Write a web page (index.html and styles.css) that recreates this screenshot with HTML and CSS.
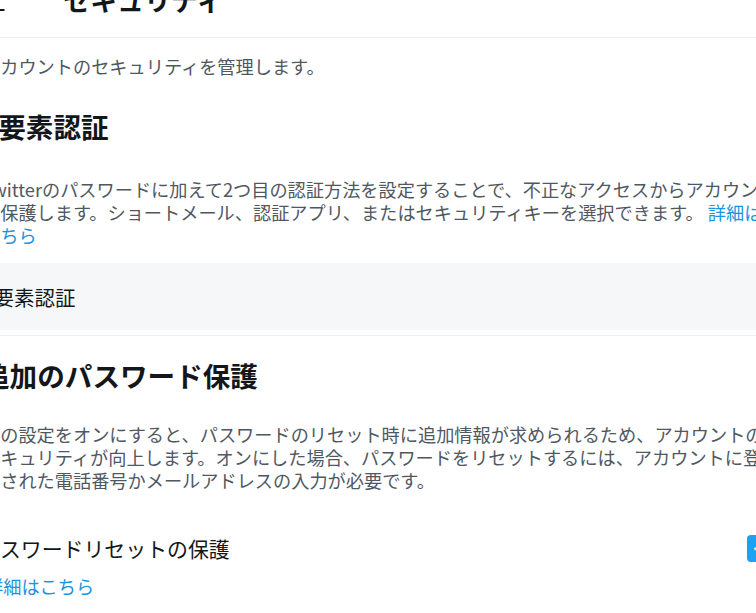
FILE: index.html
```html
<!DOCTYPE html>
<html lang="ja">

<head>
    <meta charset="UTF-8">
    <meta name="viewport" content="width=device-width, initial-scale=1.0">
    <title>セキュリティ</title>
    <link rel="stylesheet" href="styles.css">
</head>

<body>
    <div class="page">
        <!-- ヘッダー -->
        <header class="topbar">
            <span class="back">
                <svg viewBox="0 0 24 24" width="26" height="26">
                    <path d="M20 11H7.414l4.293-4.293c.39-.39.39-1.023 0-1.414s-1.023-.39-1.414 0l-6 6c-.39.39-.39 1.023 0 1.414l6 6c.195.195.45.293.707.293s.512-.098.707-.293c.39-.39.39-1.023 0-1.414L7.414 13H20c.553 0 1-.447 1-1s-.447-1-1-1z"></path>
                </svg>
            </span>
            <h2 class="title">セキュリティ</h2>
        </header>

        <p class="lead">アカウントのセキュリティを管理します。</p>

        <!-- 2要素認証 -->
        <section class="block">
            <h3 class="heading">2要素認証</h3>
            <p class="desc">Twitterのパスワードに加えて2つ目の認証方法を設定することで、不正なアクセスからアカウント<br>を保護します。ショートメール、認証アプリ、またはセキュリティキーを選択できます。 <a class="link" href="#">詳細は<br>こちら</a></p>
        </section>

        <div class="row">2要素認証</div>
        <div class="divider"></div>

        <!-- 追加のパスワード保護 -->
        <section class="block">
            <h3 class="heading heading-2">追加のパスワード保護</h3>
            <p class="desc desc-2">この設定をオンにすると、パスワードのリセット時に追加情報が求められるため、アカウントの<br>セキュリティが向上します。オンにした場合、パスワードをリセットするには、アカウントに登<br>録された電話番号かメールアドレスの入力が必要です。</p>
            <div class="check-row">
                <span class="check-label">パスワードリセットの保護</span>
                <span class="checkbox">
                    <svg viewBox="0 0 24 24" width="20" height="20">
                        <path d="M5 12.5l4.5 4.5L19 7.5" fill="none" stroke="#fff" stroke-width="2.6" stroke-linecap="round" stroke-linejoin="round"></path>
                    </svg>
                </span>
            </div>
            <a class="link more" href="#">詳細はこちら</a>
        </section>
    </div>
</body>

</html>
```

FILE: styles.css
```css
/* 全体 */
body {
    margin: 0;
    overflow: hidden;
    background-color: #fff;
    color: #14171a;
    font-family: "Noto Sans CJK JP", "Liberation Sans", sans-serif;
}

.page {
    width: 840px;
    margin-left: -40px;
}

/* ヘッダー */
.topbar {
    display: flex;
    align-items: flex-start;
    box-sizing: border-box;
    height: 68px;
    margin-top: -30px;
    padding: 13.5px 26px 0 22px;
    border-bottom: 1px solid #eceff1;
}

.back {
    display: flex;
    margin-top: 13.5px;
}

.back svg {
    fill: #14171a;
}

.title {
    margin: 0 0 0 55px;
    font-size: 27px;
    line-height: 32px;
    font-weight: 700;
}

/* 説明文 */
.lead,
.desc {
    margin: 16.5px 0 0;
    padding: 0 26px 0 22px;
    font-size: 18.2px;
    line-height: 23px;
    color: #50585f;
    white-space: nowrap;
}

.block {
    padding: 0 26px 0 22px;
}

.block .desc {
    padding: 0;
    margin-top: 36px;
}

.heading {
    margin: 32px 0 0;
    font-size: 27.6px;
    line-height: 32px;
    font-weight: 700;
    white-space: nowrap;
}

.heading-2 {
    margin-top: 22.5px;
}

.block .desc-2 {
    margin-top: 32px;
}

.link {
    color: #1b95e0;
    text-decoration: none;
}

/* 選択中の行 */
.row {
    display: flex;
    align-items: center;
    height: 67px;
    margin-top: 16.5px;
    padding: 0 26px 0 22px;
    background-color: #f5f7f8;
    font-size: 20.5px;
}

.divider {
    height: 1px;
    margin-top: 5px;
    background-color: #eceff1;
}

/* チェックボックスの行 */
.check-row {
    display: flex;
    align-items: center;
    justify-content: space-between;
    height: 28px;
    margin-top: 42.5px;
    font-size: 20.9px;
}

.check-label {
    margin-left: -3px;
}

.checkbox {
    display: flex;
    align-items: center;
    justify-content: center;
    width: 27px;
    height: 27px;
    border-radius: 4px;
    background-color: #1da1f2;
}

.more {
    display: block;
    margin: 12.5px 0 0 3px;
    font-size: 18.2px;
    line-height: 23px;
}
```
